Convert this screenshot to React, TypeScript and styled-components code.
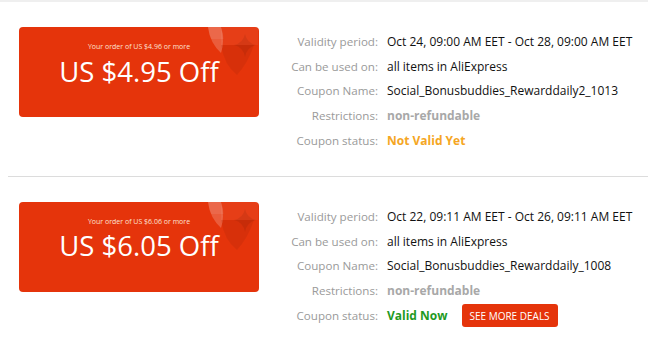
import React from "react";
import styled, { createGlobalStyle } from "styled-components";

const Global = createGlobalStyle`
  html, body { margin: 0; padding: 0; background: #fff; }
  body { font-family: "Open Sans", "Liberation Sans", sans-serif; }
`;

const Page = styled.div`
  width: 648px;
  border-top: 2px solid #efefef;
`;

const Section = styled.section<{ $divider?: boolean }>`
  display: flex;
  align-items: flex-start;
  padding: 25px 0 23px 19px;
  border-top: ${(p) => (p.$divider ? "1px solid #dcdcdc" : "none")};
  margin-left: ${(p) => (p.$divider ? "8px" : "0")};
  padding-left: ${(p) => (p.$divider ? "11px" : "19px")};
`;

const Card = styled.div`
  position: relative;
  width: 240px;
  height: 90px;
  border-radius: 4px;
  background: #e5340b;
  overflow: hidden;
  display: flex;
  flex-direction: column;
  align-items: center;
  color: #fff;
  flex-shrink: 0;
`;

const Decor = styled.svg`
  position: absolute;
  top: 0;
  right: 1px;
`;

const Minimum = styled.div`
  position: relative;
  margin-top: 15px;
  font-size: 7px;
  line-height: 10px;
  color: #fde0d2;
`;

const Amount = styled.div`
  position: relative;
  margin-top: 0.5px;
  font-size: 27.5px;
  line-height: 38px;
`;

const Details = styled.div`
  display: grid;
  grid-template-columns: 119px auto;
  column-gap: 9px;
  grid-auto-rows: 24.8px;
  align-items: center;
  margin-top: 2px;
  font-size: 12px;
`;

const Label = styled.div`
  text-align: right;
  color: #9a9a9a;
  font-size: 11.6px;
  white-space: nowrap;
`;

const Value = styled.div<{ $tone?: "muted" | "pending" | "ok" }>`
  display: flex;
  align-items: center;
  gap: 14px;
  white-space: nowrap;
  color: ${(p) =>
    p.$tone === "muted"
      ? "#a8a8a8"
      : p.$tone === "pending"
      ? "#f5a623"
      : p.$tone === "ok"
      ? "#1f9a1f"
      : "#111"};
  font-weight: ${(p) => (p.$tone ? 700 : 400)};
`;

const DealsButton = styled.button`
  border: none;
  border-radius: 3px;
  background: #e5340b;
  color: #fff;
  font-family: "Open Sans", "Liberation Sans", sans-serif;
  font-size: 10px;
  height: 23px;
  width: 96px;
  padding: 0;
  cursor: pointer;
`;

const Decoration = () => (
  <Decor width="50" height="50" viewBox="0 0 50 50">
    <rect x="13" y="0" width="37" height="18" fill="#ffffff" opacity="0.05" />
    <path d="M0 0 L13 0 Q17 14 13 26 Q2 16 0 0 Z" fill="#ffffff" opacity="0.2" />
    <path d="M0 0 L13 0 Q15.5 6 15.5 12 L3 12 Q0.5 6 0 0 Z" fill="#ffffff" opacity="0.08" />
    <path d="M13 18 L46 18 Q40 36 29 48 Q16 38 13 18 Z" fill="#000000" opacity="0.06" />
    <path d="M37 7 Q39 16 48 18 Q39 20 37 30 Q35 20 26 18 Q35 16 37 7 Z" fill="#000000" opacity="0.07" />
  </Decor>
);

type Coupon = {
  min: string;
  off: string;
  period: string;
  name: string;
  valid: boolean;
};

const coupons: Coupon[] = [
  {
    min: "Your order of US $4.96 or more",
    off: "US $4.95 Off",
    period: "Oct 24, 09:00 AM EET - Oct 28, 09:00 AM EET",
    name: "Social_Bonusbuddies_Rewarddaily2_1013",
    valid: false,
  },
  {
    min: "Your order of US $6.06 or more",
    off: "US $6.05 Off",
    period: "Oct 22, 09:11 AM EET - Oct 26, 09:11 AM EET",
    name: "Social_Bonusbuddies_Rewarddaily_1008",
    valid: true,
  },
];

export default function App() {
  return (
    <>
      <Global />
      <Page>
        {coupons.map((c, i) => (
          <Section key={i} $divider={i > 0}>
            <Card>
              <Decoration />
              <Minimum>{c.min}</Minimum>
              <Amount>{c.off}</Amount>
            </Card>
            <Details>
              <Label>Validity period:</Label>
              <Value>{c.period}</Value>
              <Label>Can be used on:</Label>
              <Value>all items in AliExpress</Value>
              <Label>Coupon Name:</Label>
              <Value>{c.name}</Value>
              <Label>Restrictions:</Label>
              <Value $tone="muted">non-refundable</Value>
              <Label>Coupon status:</Label>
              <Value $tone={c.valid ? "ok" : "pending"}>
                {c.valid ? "Valid Now" : "Not Valid Yet"}
                {c.valid && <DealsButton>SEE MORE DEALS</DealsButton>}
              </Value>
            </Details>
          </Section>
        ))}
      </Page>
    </>
  );
}
